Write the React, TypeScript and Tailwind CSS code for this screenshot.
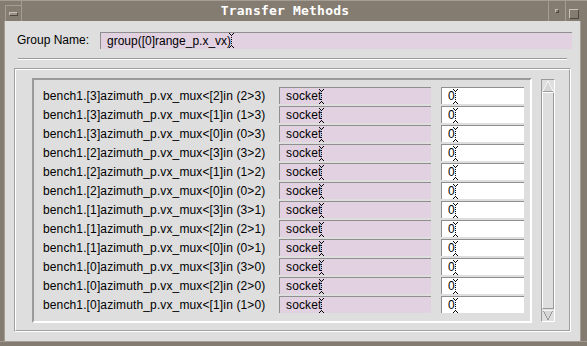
import React from "react";

const rows = [
  "bench1.[3]azimuth_p.vx_mux<[2]in (2>3)",
  "bench1.[3]azimuth_p.vx_mux<[1]in (1>3)",
  "bench1.[3]azimuth_p.vx_mux<[0]in (0>3)",
  "bench1.[2]azimuth_p.vx_mux<[3]in (3>2)",
  "bench1.[2]azimuth_p.vx_mux<[1]in (1>2)",
  "bench1.[2]azimuth_p.vx_mux<[0]in (0>2)",
  "bench1.[1]azimuth_p.vx_mux<[3]in (3>1)",
  "bench1.[1]azimuth_p.vx_mux<[2]in (2>1)",
  "bench1.[1]azimuth_p.vx_mux<[0]in (0>1)",
  "bench1.[0]azimuth_p.vx_mux<[3]in (3>0)",
  "bench1.[0]azimuth_p.vx_mux<[2]in (2>0)",
  "bench1.[0]azimuth_p.vx_mux<[1]in (1>0)",
];

// dotted I-beam text cursor
function Caret() {
  const dots: [number, number][] = [
    [0, 0], [4, 0], [1, 1], [3, 1], [2, 2],
    [2, 4], [2, 6], [2, 8], [2, 10],
    [2, 12], [1, 13], [3, 13], [0, 14], [4, 14],
  ];
  return (
    <svg width="5" height="15" className="-ml-[2px] shrink-0" shapeRendering="crispEdges">
      {dots.map(([x, y], i) => (
        <rect key={i} x={x} y={y} width="1" height="1" fill="#000" />
      ))}
    </svg>
  );
}

function Field({ value, pink, className }: { value: string; pink?: boolean; className: string }) {
  return (
    <div
      className={`flex h-[17px] items-center border-t border-l border-[#8f8f8f] border-r-white border-b-white pl-[6px] ${
        pink ? "bg-[#e1d1e1]" : "bg-white"
      } ${className}`}
    >
      <span className="leading-none">{value}</span>
      <Caret />
    </div>
  );
}

export default function App() {
  return (
    <div
      className="flex h-[346px] w-[587px] flex-col bg-[#857c71] text-[12px] text-black"
      style={{ fontFamily: '"Liberation Sans", Arial, sans-serif' }}
    >
      {/* title bar */}
      <div className="flex h-[22px] border-t border-[#a59d93]">
        <div className="flex w-[22px] items-start border-r border-[#a59d93] pl-[5px] pt-[4px]">
          <div className="flex h-[16px] w-[16px] items-center justify-center border-l border-t border-[#a59d93]">
            <div className="h-[4px] w-[9px] border border-t-[#c8c1b8] border-l-[#c8c1b8] border-r-[#4f4841] border-b-[#4f4841] bg-[#9b9389]" />
          </div>
        </div>
        <div
          className="flex flex-1 items-center justify-center text-[13px] font-bold tracking-[0.2px] text-white"
          style={{ fontFamily: '"DejaVu Sans Mono", "Liberation Mono", monospace' }}
        >
          Transfer Methods
        </div>
        <div className="flex w-[17px] items-center justify-center border-l border-[#a59d93]">
          <div className="h-[4px] w-[4px] border border-t-[#c8c1b8] border-l-[#c8c1b8] border-r-[#4f4841] border-b-[#4f4841]" />
        </div>
        <div className="flex w-[22px] items-start border-l border-[#a59d93] pl-[3px] pt-[8px]">
          <div className="h-[10px] w-[10px] border border-t-[#c8c1b8] border-l-[#c8c1b8] border-r-[#4f4841] border-b-[#4f4841]" />
        </div>
      </div>

      <div className="flex flex-1">
        <div className="w-[5px] border-r border-[#a59d93]" />
        <div className="flex flex-1 flex-col bg-[#dedede] pt-[10px]">
          {/* group name */}
          <div className="flex items-center pl-[12px] pr-[8px]">
            <span className="w-[83px]">Group Name:</span>
            <Field value="group([0]range_p.x_vx)" pink className="flex-1" />
          </div>

          {/* separator */}
          <div className="mx-[13px] mt-[9px] h-[2px] border-t border-[#9a9a9a] border-b border-b-white" />

          {/* frame */}
          <div className="mx-[9px] mt-[8px] mb-[9px] flex-1 border border-t-[#a0a0a0] border-l-[#a0a0a0] border-r-white border-b-white">
            <div className="flex h-full border border-t-white border-l-white border-r-[#a0a0a0] border-b-[#a0a0a0] pl-[16px] pt-[8px] pb-[7px]">
              <div className="flex h-[245px] w-[500px] flex-col gap-[2px] border-2 border-t-[#9a9a9a] border-l-[#9a9a9a] border-r-white border-b-white pl-[9px] pt-[7px] tracking-[0.13px]">
                {rows.map((r) => (
                  <div key={r} className="flex items-center">
                    <span className="w-[236px] whitespace-nowrap leading-none">{r}</span>
                    <Field value="socket" pink className="w-[152px]" />
                    <Field value="0" className="ml-[10px] w-[83px]" />
                  </div>
                ))}
              </div>

              {/* scrollbar */}
              <div className="ml-[9px] mt-[1px] flex h-[243px] w-[14px] flex-col border border-t-[#9a9a9a] border-l-[#9a9a9a] border-r-white border-b-white">
                <svg width="12" height="12" shapeRendering="crispEdges">
                  <polygon points="6,1 11,11 1,11" fill="#d6d6d6" stroke="#f4f4f4" strokeWidth="1" />
                  <line x1="11" y1="11" x2="1" y2="11" stroke="#9a9a9a" />
                </svg>
                <div className="flex-1 border border-t-white border-l-white border-r-[#9a9a9a] border-b-[#9a9a9a]" />
                <svg width="12" height="12" shapeRendering="crispEdges">
                  <polygon points="1,1 11,1 6,11" fill="#d6d6d6" stroke="#9a9a9a" strokeWidth="1" />
                  <line x1="1" y1="1" x2="11" y2="1" stroke="#f4f4f4" />
                </svg>
              </div>
            </div>
          </div>
        </div>
        <div className="w-[7px] border-l border-[#a59d93]" />
      </div>
      <div className="h-[6px] border-t border-[#a59d93]" />
    </div>
  );
}
